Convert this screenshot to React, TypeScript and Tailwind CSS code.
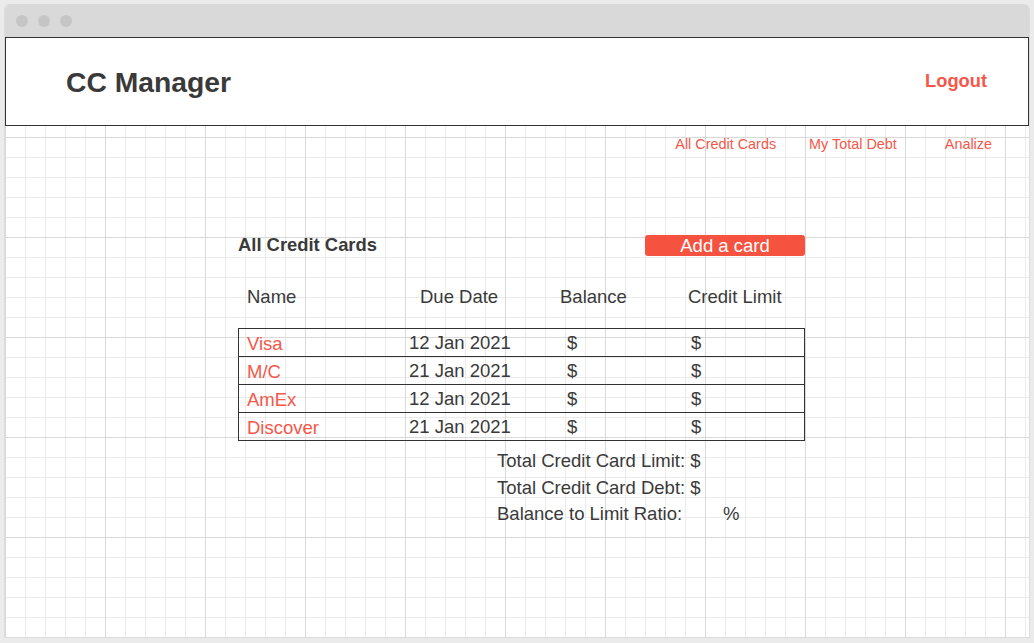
import React from 'react';

const cards = [
  { name: 'Visa', due: '12 Jan 2021' },
  { name: 'M/C', due: '21 Jan 2021' },
  { name: 'AmEx', due: '12 Jan 2021' },
  { name: 'Discover', due: '21 Jan 2021' },
];

const App = () => {
  return (
    <div className="h-[643px] w-[1034px] bg-[#ebebeb] pt-[4px] pl-[4px] font-['Liberation_Sans',Arial,sans-serif] text-[#3a3a3a]">
      {/* Window */}
      <div className="w-[1026px] h-[634px] flex flex-col border border-t-0 border-[#dcdcdc] rounded-t-[6px] overflow-hidden">
        {/* Title bar */}
        <div className="h-[33px] shrink-0 bg-[#d9d9d9] flex items-center gap-[10px] pl-[12px] -mx-px">
          <span className="w-[12px] h-[12px] rounded-full bg-[#c5c5c5]" />
          <span className="w-[12px] h-[12px] rounded-full bg-[#c5c5c5]" />
          <span className="w-[12px] h-[12px] rounded-full bg-[#c5c5c5]" />
        </div>

        {/* Content with grid paper */}
        <div className="flex-1 bg-white bg-[linear-gradient(to_right,#d9d9d9_1px,transparent_1px),linear-gradient(to_bottom,#d9d9d9_1px,transparent_1px),linear-gradient(to_right,#ebebeb_1px,transparent_1px),linear-gradient(to_bottom,#ebebeb_1px,transparent_1px)] bg-[size:100px_100px,100px_100px,20px_20px,20px_20px]">
          {/* Header */}
          <header className="h-[89px] bg-white border border-[#333] flex items-center justify-between pl-[60px] pr-[41px]">
            <h1 className="text-[28.3px] font-bold leading-none pt-[2px]">CC Manager</h1>
            <a href="#" className="text-[18.3px] font-bold text-[#f5574a] leading-none">
              Logout
            </a>
          </header>

          {/* Nav */}
          <nav className="flex justify-end pt-[10px] pr-[37px] text-[14.4px] leading-[16px] text-[#f5574a]">
            <a href="#">All Credit Cards</a>
            <a href="#" className="ml-[33px]">My Total Debt</a>
            <a href="#" className="ml-[48px]">Analize</a>
          </nav>

          {/* Main */}
          <section className="ml-[233px] w-[567px] mt-[83px] text-[18.5px]">
            <div className="flex items-center justify-between h-[21px]">
              <h2 className="text-[18.4px] font-bold leading-none">All Credit Cards</h2>
              <button className="w-[160px] h-[21px] rounded-[3px] bg-[#f5533f] text-white leading-[21px] text-center">
                Add a card
              </button>
            </div>

            {/* Column headings */}
            <div className="flex mt-[30px] pl-[9px] leading-[21px]">
              <span className="w-[173px]">Name</span>
              <span className="w-[140px]">Due Date</span>
              <span className="w-[128px]">Balance</span>
              <span>Credit Limit</span>
            </div>

            {/* Table */}
            <div className="mt-[21px] border border-[#333]">
              {cards.map((c, i) => (
                <div
                  key={c.name}
                  className={`flex items-center pl-[8px] ${i > 0 ? 'h-[28px] border-t border-[#333]' : 'h-[27px]'}`}
                >
                  <span className="w-[162px] text-[#f5574a] pt-[3px]">{c.name}</span>
                  <span className="w-[158px]">{c.due}</span>
                  <span className="w-[124px]">$</span>
                  <span>$</span>
                </div>
              ))}
            </div>

            {/* Totals */}
            <div className="mt-[7px] ml-[259px] leading-[26.5px]">
              <div>Total Credit Card Limit: $</div>
              <div>Total Credit Card Debt: $</div>
              <div className="flex">
                <span className="w-[226px]">Balance to Limit Ratio:</span>
                <span>%</span>
              </div>
            </div>
          </section>
        </div>
      </div>
    </div>
  );
};

export default App;
